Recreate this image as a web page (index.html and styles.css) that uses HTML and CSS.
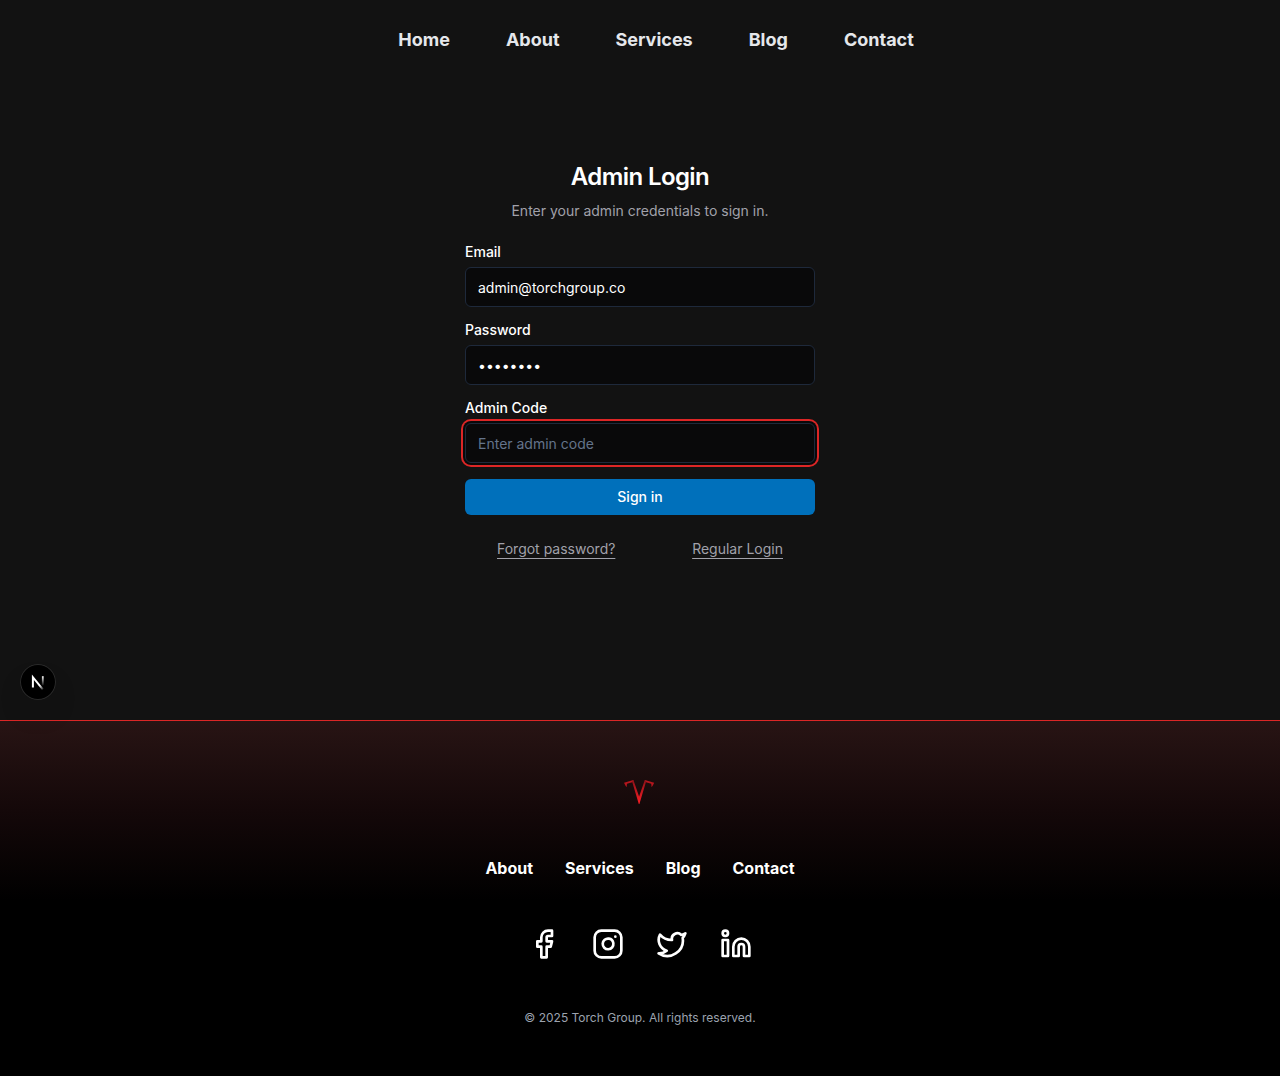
FILE: index.html
```html
<!DOCTYPE html>
<html lang="en">
<head>
<meta charset="utf-8">
<meta name="viewport" content="width=device-width, initial-scale=1">
<title>Admin Login – Torch Group</title>
<link rel="stylesheet" href="styles.css">
</head>
<body>
<header class="site-header">
  <nav class="main-nav" aria-label="Main">
    <a href="#">Home</a>
    <a href="#">About</a>
    <a href="#">Services</a>
    <a href="#">Blog</a>
    <a href="#">Contact</a>
  </nav>
</header>

<main class="login">
  <div class="login-panel">
    <div class="login-intro">
      <h1>Admin Login</h1>
      <p>Enter your admin credentials to sign in.</p>
    </div>
    <form class="login-form">
      <div class="field">
        <label for="email">Email</label>
        <input id="email" type="email" value="admin@torchgroup.co">
      </div>
      <div class="field">
        <label for="password">Password</label>
        <input id="password" type="password" value="password">
      </div>
      <div class="field">
        <label for="code">Admin Code</label>
        <input id="code" class="is-active" type="text" placeholder="Enter admin code">
      </div>
      <button class="submit" type="submit">Sign in</button>
    </form>
    <div class="login-links">
      <a href="#">Forgot password?</a>
      <a href="#">Regular Login</a>
    </div>
  </div>
</main>

<button class="dev-badge" type="button" aria-label="Open developer tools">
  <svg width="36" height="36" viewBox="0 0 36 36" fill="none">
    <defs>
      <linearGradient id="n-diagonal" gradientUnits="userSpaceOnUse" x1="18" y1="18" x2="24" y2="25">
        <stop offset="0.4" stop-color="#fff"/>
        <stop offset="1" stop-color="#fff" stop-opacity="0.1"/>
      </linearGradient>
      <linearGradient id="n-stem" gradientUnits="userSpaceOnUse" x1="23" y1="12" x2="23" y2="22">
        <stop offset="0" stop-color="#fff"/>
        <stop offset="1" stop-color="#fff" stop-opacity="0"/>
      </linearGradient>
    </defs>
    <path d="M12.9 23.6V13.2L22.8 25.4" stroke="url(#n-diagonal)" stroke-width="2"/>
    <path d="M22.8 12.2V21.5" stroke="url(#n-stem)" stroke-width="1.8"/>
  </svg>
</button>

<footer class="site-footer">
  <a class="brand" href="#" aria-label="Torch Group">
    <svg width="32" height="26" viewBox="0 0 32 26">
      <defs>
        <linearGradient id="torch" x1="0" y1="0" x2="0" y2="1">
          <stop offset="0" stop-color="#8d1219"/>
          <stop offset="1" stop-color="#fb1d24"/>
        </linearGradient>
      </defs>
      <path fill="#b5161d" d="M0 3.8 9.4 1 9 3 3 4.8 2.6 8.2 1.4 6.4zM30.2 3.8 20.8 1l.4 2 6 1.8.4 3.4 1.2-1.8z"/>
      <path fill="url(#torch)" d="M7.8 1.4 9.4 1 15.1 17.4 20.8 1l1.6.4L15.4 25h-.6z"/>
    </svg>
  </a>
  <nav class="footer-nav" aria-label="Footer">
    <a href="#">About</a>
    <a href="#">Services</a>
    <a href="#">Blog</a>
    <a href="#">Contact</a>
  </nav>
  <div class="social">
    <a href="#" aria-label="Facebook"><svg viewBox="0 0 24 24"><path d="M18 2h-3a5 5 0 0 0-5 5v3H7v4h3v8h4v-8h3l1-4h-4V7a1 1 0 0 1 1-1h3z"/></svg></a>
    <a href="#" aria-label="Instagram"><svg viewBox="0 0 24 24"><rect x="2" y="2" width="20" height="20" rx="5"/><path d="M16 11.37A4 4 0 1 1 12.63 8 4 4 0 0 1 16 11.37zM17.5 6.5h.01"/></svg></a>
    <a href="#" aria-label="Twitter"><svg viewBox="0 0 24 24"><path d="M22 4s-.7 2.1-2 3.4c1.6 10-9.4 17.3-18 11.6 2.2.1 4.4-.6 6-2C3 15.5.5 9.6 3 5c2.2 2.6 5.6 4.1 9 4-.9-4.2 4-6.6 7-3.8 1.1 0 3-1.2 3-1.2z"/></svg></a>
    <a href="#" aria-label="LinkedIn"><svg viewBox="0 0 24 24"><path d="M16 8a6 6 0 0 1 6 6v7h-4v-7a2 2 0 0 0-4 0v7h-4v-7a6 6 0 0 1 6-6z"/><rect x="2" y="9" width="4" height="12"/><circle cx="4" cy="4" r="2"/></svg></a>
  </div>
  <p class="copyright">© 2025 Torch Group. All rights reserved.</p>
</footer>
</body>
</html>
```
FILE: styles.css
```css
*,
*::before,
*::after {
  box-sizing: border-box;
}

body {
  margin: 0;
  background: #121212;
  color: #fff;
  font-family: Inter, "Liberation Sans", sans-serif;
  font-size: 14px;
  line-height: 20px;
}

h1,
p {
  margin: 0;
}

a {
  color: inherit;
  text-decoration: none;
}

svg {
  display: block;
}

/* Header */
.site-header {
  display: flex;
  justify-content: center;
  align-items: center;
  height: 80px;
  padding-left: 32px;
}

.main-nav {
  display: flex;
  gap: 56px;
  color: #e5e7eb;
  font-size: 18px;
  font-weight: 700;
  line-height: 28px;
}

/* Login */
.login {
  display: flex;
  justify-content: center;
  padding: 81px 16px 161px;
}

.login-panel {
  display: flex;
  flex-direction: column;
  gap: 24px;
  width: 100%;
  max-width: 350px;
}

.login-intro {
  display: flex;
  flex-direction: column;
  gap: 8px;
  text-align: center;
}

.login-intro h1 {
  font-size: 24px;
  font-weight: 600;
  line-height: 32px;
  letter-spacing: -0.025em;
}

.login-intro p,
.login-links {
  color: #a1a1aa;
}

.login-form {
  display: flex;
  flex-direction: column;
  gap: 16px;
}

.field {
  display: flex;
  flex-direction: column;
  gap: 8px;
}

.field label {
  font-weight: 500;
  line-height: 14px;
}

.field input {
  width: 100%;
  height: 40px;
  padding: 8px 12px;
  border: 1px solid #1e293b;
  border-radius: 6px;
  background: #09090a;
  color: #fff;
  font: inherit;
  outline: none;
}

.field input::placeholder {
  color: #64748b;
  opacity: 1;
}

.field input:focus-visible,
.field input.is-active {
  box-shadow: 0 0 0 2px #09090a, 0 0 0 4px #dc2626;
}

.submit {
  height: 36px;
  border: 0;
  border-radius: 6px;
  background: #0070bb;
  color: #fff;
  font: inherit;
  font-weight: 500;
  cursor: pointer;
}

.login-links {
  display: flex;
  justify-content: space-between;
  padding: 0 32px;
}

.login-links a {
  text-decoration: underline;
  text-underline-offset: 4px;
}

/* Floating badge */
.dev-badge {
  position: absolute;
  top: 664px;
  left: 20px;
  width: 36px;
  height: 36px;
  padding: 0;
  border: 0;
  border-radius: 50%;
  background: #000;
  box-shadow: inset 0 0 0 1px #2a2a2a, 0 16px 32px -8px rgba(0, 0, 0, 0.24);
}

/* Footer */
.site-footer {
  display: flex;
  flex-direction: column;
  align-items: center;
  padding: 58px 16px 48px;
  border-top: 1px solid #dc2626;
  background: linear-gradient(#281414, #140809 90px, #000 180px);
}

.footer-nav {
  display: flex;
  gap: 32px;
  margin-top: 51px;
  font-size: 16px;
  font-weight: 700;
  line-height: 24px;
}

.social {
  display: flex;
  gap: 32px;
  margin: 48px 0;
}

.social svg {
  width: 32px;
  height: 32px;
  fill: none;
  stroke: #fff;
  stroke-width: 2;
  stroke-linecap: round;
  stroke-linejoin: round;
}

.copyright {
  color: #9ca3af;
  font-size: 12px;
  line-height: 20px;
}
```
